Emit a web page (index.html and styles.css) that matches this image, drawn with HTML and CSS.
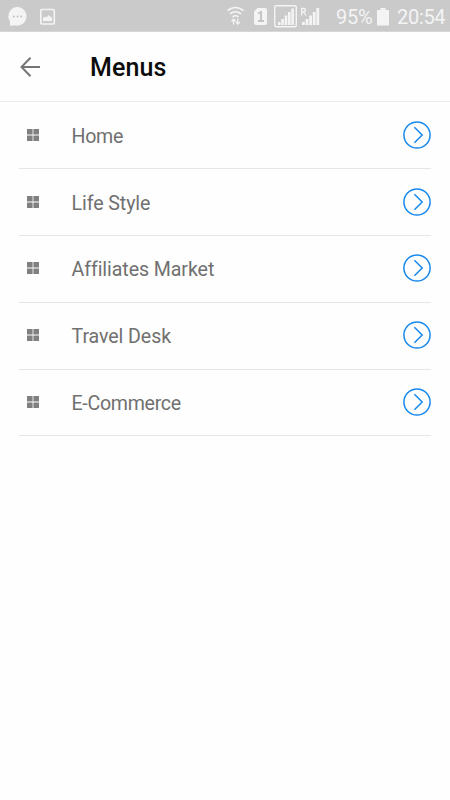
FILE: index.html
```html
<!DOCTYPE html>
<html lang="en">
<head>
<meta charset="utf-8">
<title>Menus</title>
<link rel="stylesheet" href="styles.css">
</head>
<body>
<svg class="defs" width="0" height="0" aria-hidden="true">
  <symbol id="tiles" viewBox="0 0 12 12"><path d="M0 0h5.6v5.6H0zM6.4 0H12v5.6H6.4zM0 6.4h5.6V12H0zM6.4 6.4H12V12H6.4z" fill="#808080"/></symbol>
  <symbol id="go" viewBox="0 0 28 28"><g fill="none" stroke="#1688ee" stroke-width="1.5"><circle cx="14" cy="14" r="13.1"/><path d="M11.4 6.200 19.200 14l-7.800 7.800"/></g></symbol>
</svg>
<div class="status">
  <svg class="status-icons" width="330" height="31" viewBox="0 0 330 31" fill="#f4f4f4">
    <path d="M17.5 7a9.3 9.3 0 1 1-3 18.2L10 26v-4.500A9.300 9.300 0 0 1 17.500 7z"/>
    <g fill="#c4c4c4"><circle cx="13.800" cy="16.500" r="1"/><circle cx="17.500" cy="16.500" r="1"/><circle cx="21.200" cy="16.500" r="1"/></g>
    <rect x="40.800" y="9.500" width="13.500" height="14.500" rx="1" fill="none" stroke="#f4f4f4" stroke-width="1.600"/>
    <path d="M43 21v-3l2-1.500 1.500 1 2-2.500 1.500 1.500 2 1V21z"/>
    <g fill="none" stroke="#f4f4f4" stroke-width="1.600">
      <path d="M227.500 10.500q8-6 16 0M230 13.800q5.500-4.200 11 0M232.500 16.800q3-2.200 6 0"/>
      <path d="M233.500 24.500v-5M231.500 21.300l2-2.100 2 2.100M237.800 18.500v5M235.800 22l2 2.100 2-2.100" stroke-width="1.300"/>
    </g>
    <path d="M257.500 8h7.500a2 2 0 0 1 2 2v13a2 2 0 0 1-2 2h-9a2 2 0 0 1-2-2V11.500z"/>
    <path d="M258 13.500l3-1.500v9M258 21h6" fill="none" stroke="#c4c4c4" stroke-width="1.900"/>
    <rect x="274.700" y="5.700" width="21.600" height="21" rx="1.500" fill="none" stroke="#f4f4f4" stroke-width="1.400"/>
    <path d="M278 22h2.500v3H278zM281.300 19h2.600v6h-2.600zM284.700 15.500h2.600V25h-2.600zM288 12h2.600v13H288zM291.300 8.500h2.600V25h-2.600z"/>
    <path d="M302 22h2.800v3H302zM305.600 19h2.800v6h-2.800zM309.200 15.500h2.800V25h-2.800zM312.800 12h2.800v13h-2.800zM316.400 8h2.800v17h-2.800z"/>
    <path d="M301.700 15.500v-7h2a1.700 1.700 0 0 1 0 3.500h-2m2 0 2.200 3.500" fill="none" stroke="#f4f4f4" stroke-width="1.300"/>
  </svg>
  <span class="battery">95%</span>
  <svg class="cell" width="12" height="18" viewBox="0 0 12 18" fill="#f4f4f4"><path d="M3.500 0h5v2H12v15.500H0V2h3.500z"/></svg>
  <span class="clock">20:54</span>
</div>
<header class="bar">
  <svg class="back" width="22" height="20" viewBox="0 0 22 20" fill="none" stroke="#757575" stroke-width="2"><path d="M21 10H2.500M11.500.8 2.500 10l9 9.200"/></svg>
  <h1 class="title">Menus</h1>
</header>
<main class="list">
  <div class="row"><svg class="tiles"><use href="#tiles"/></svg><span class="label">Home</span><svg class="go"><use href="#go"/></svg></div>
  <div class="row"><svg class="tiles"><use href="#tiles"/></svg><span class="label loose">Life Style</span><svg class="go"><use href="#go"/></svg></div>
  <div class="row"><svg class="tiles"><use href="#tiles"/></svg><span class="label loose">Affiliates Market</span><svg class="go"><use href="#go"/></svg></div>
  <div class="row"><svg class="tiles"><use href="#tiles"/></svg><span class="label loose">Travel Desk</span><svg class="go"><use href="#go"/></svg></div>
  <div class="row"><svg class="tiles"><use href="#tiles"/></svg><span class="label">E-Commerce</span><svg class="go"><use href="#go"/></svg></div>
</main>
</body>
</html>
```
FILE: styles.css
```css
* { box-sizing: border-box; }
body {
  margin: 0;
  height: 800px;
  overflow: hidden;
  background: #fefefe;
  font-family: Roboto, "Liberation Sans", sans-serif;
}
.defs { display: block; }
.status {
  display: flex;
  height: 32px;
  background: #cacaca;
  border-bottom: 1px solid #d6d6d6;
  color: #f4f4f4;
  font-size: 20px;
  line-height: 35px;
  white-space: nowrap;
}
.status-icons { flex: none; }
.battery { width: 47px; padding-left: 6px; letter-spacing: -0.2px; }
.cell { flex: none; margin-top: 8px; }
.clock { margin-left: 8px; letter-spacing: -0.3px; }
.bar {
  display: flex;
  align-items: center;
  height: 70px;
  padding-left: 19px;
  border-bottom: 1px solid #ececec;
}
.title {
  margin: 2px 0 0 49px;
  font-size: 25px;
  font-weight: 500;
  line-height: 30px;
  letter-spacing: 0.1px;
  color: #0c0c0c;
}
.list { padding: 0.5px 19px 0; }
.row {
  display: flex;
  align-items: center;
  height: 66.75px;
  padding-left: 7.5px;
  border-bottom: 1px solid #e6e6e6;
}
.tiles { width: 12px; height: 12px; margin-top: -1px; }
.label {
  flex: 1;
  margin: 3px 0 0 33px;
  font-size: 19.6px;
  line-height: 24px;
  font-variant-ligatures: none;
  letter-spacing: -0.3px;
  color: #707070;
}
.loose { letter-spacing: -0.08px; }
.go { width: 28px; height: 28px; margin-top: -1px; }
```
